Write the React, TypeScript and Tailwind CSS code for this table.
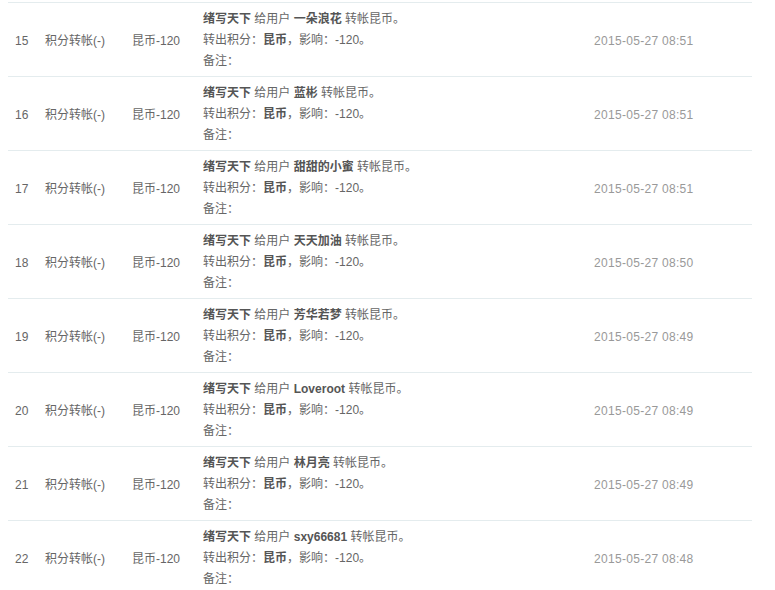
import React from "react";

const rows = [
  { n: 15, user: "一朵浪花", time: "2015-05-27 08:51" },
  { n: 16, user: "蓝彬", time: "2015-05-27 08:51" },
  { n: 17, user: "甜甜的小蜜", time: "2015-05-27 08:51" },
  { n: 18, user: "天天加油", time: "2015-05-27 08:50" },
  { n: 19, user: "芳华若梦", time: "2015-05-27 08:49" },
  { n: 20, user: "Loveroot", time: "2015-05-27 08:49" },
  { n: 21, user: "林月亮", time: "2015-05-27 08:49" },
  { n: 22, user: "sxy66681", time: "2015-05-27 08:48" },
];

export default function App() {
  return (
    <div
      className="w-[775px] h-[590px] overflow-hidden bg-white pt-[2px] pl-[8px] text-[12px] text-[#666]"
      style={{ fontFamily: '"Liberation Sans", Arial, "Noto Sans CJK SC", sans-serif' }}
    >
      <div className="w-[744px]">
        {rows.map((r) => (
          <div key={r.n} className="flex border-t border-[#e4ecee] h-[74px] pt-[6px] pb-[4px]">
            <div className="w-[30px] pl-[7px] flex items-center">{r.n}</div>
            <div className="w-[87px] pl-[7px] flex items-center">积分转帐(-)</div>
            <div className="w-[71px] pl-[7px] flex items-center">昆币-120</div>
            <div className="w-[391px] pl-[7px] leading-[21px]">
              <div>
                <b className="font-bold text-[#555]">绪写天下</b> 给用户{" "}
                <b className="font-bold text-[#555]">{r.user}</b> 转帐昆币。
              </div>
              <div>
                转出积分：<b className="font-bold text-[#555]">昆币</b>，影响：-120。
              </div>
              <div>备注：</div>
            </div>
            <div className="w-[165px] pl-[7px] flex items-center text-[#999] tracking-[0.3px]">{r.time}</div>
          </div>
        ))}
      </div>
    </div>
  );
}
